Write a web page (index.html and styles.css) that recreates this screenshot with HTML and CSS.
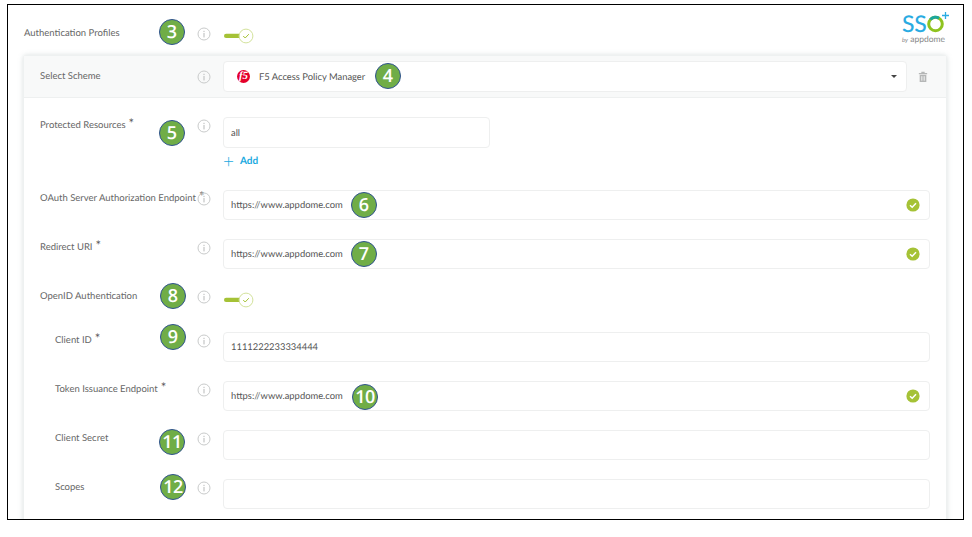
FILE: index.html
```html
<!DOCTYPE html>
<html lang="en">
<head>
<meta charset="utf-8">
<title>Authentication Profiles</title>
<link rel="stylesheet" href="styles.css">
</head>
<body>
<svg class="defs" width="0" height="0" aria-hidden="true">
  <symbol id="info" viewBox="0 0 14 14">
    <circle cx="7" cy="7" r="6" fill="none" stroke="#c9cbcb" stroke-width="1"/>
    <rect x="6.4" y="6" width="1.2" height="4.4" fill="#c3c5c5"/>
    <rect x="6.4" y="3.8" width="1.2" height="1.3" fill="#c3c5c5"/>
  </symbol>
  <symbol id="ok" viewBox="0 0 14 14">
    <circle cx="7" cy="7" r="6.6" fill="#a5c236"/>
    <path d="M4 7.2l2.2 2 3.8-4" fill="none" stroke="#fff" stroke-width="1.5"/>
  </symbol>
  <symbol id="toggle" viewBox="0 0 30 16">
    <rect x="0" y="5.8" width="17" height="4.2" rx="2.1" fill="#a5c236"/>
    <circle cx="22" cy="8" r="6.9" fill="#fff" stroke="#d3e29b" stroke-width="1"/>
    <path d="M19.2 8l2 2 3.6-3.8" fill="none" stroke="#a5c236" stroke-width="1"/>
  </symbol>
</svg>
<main class="frame">
  <div class="logo">
    <div class="logo-mark">
      <span class="logo-ss">SS</span><svg class="logo-ring" viewBox="0 0 26 24" role="img" aria-label="O"><circle cx="9.5" cy="13" r="6.8" fill="none" stroke="#8fc31f" stroke-width="3"/><path d="M4.4 8.6a6.8 6.8 0 0 1 8.6-1.4" fill="none" stroke="#1ba6a0" stroke-width="3"/><path d="M19.5 1v7M16 4.5h7" stroke="#29abe2" stroke-width="1.3"/></svg>
    </div>
    <div class="logo-by"><i>by</i> appdome</div>
  </div>

  <div class="row row-top">
    <span class="label">Authentication Profiles</span>
    <svg class="info"><use href="#info"/></svg>
    <svg class="toggle"><use href="#toggle"/></svg>
    <span class="badge b3">3</span>
  </div>

  <section class="card">
    <div class="row scheme">
      <span class="label">Select Scheme</span>
      <svg class="info"><use href="#info"/></svg>
      <div class="control">
        <div class="input select">
          <span class="f5">f5</span>
          <span class="value">F5 Access Policy Manager</span>
          <span class="caret"></span>
        </div>
        <svg class="trash" viewBox="0 0 12 14" aria-hidden="true">
          <path d="M4 1.5h4M1 3h10" stroke="#b5b7b7" stroke-width="1.4" fill="none"/>
          <path d="M2 4.4h8V13H2z" fill="#b5b7b7"/>
          <path d="M4.2 6v5.4M6 6v5.4M7.8 6v5.4" stroke="#fff" stroke-width=".7"/>
        </svg>
      </div>
      <span class="badge b4">4</span>
    </div>

    <div class="rows">
      <div class="row field-group">
        <span class="label">Protected Resources<sup>*</sup></span>
        <svg class="info"><use href="#info"/></svg>
        <div class="stack">
          <div class="input short"><span class="value">all</span></div>
          <div class="add"><span class="plus">+</span>Add</div>
        </div>
        <span class="badge b5">5</span>
      </div>

      <div class="row">
        <span class="label">OAuth Server Authorization Endpoint<sup>*</sup></span>
        <svg class="info"><use href="#info"/></svg>
        <div class="input"><span class="value">https://www.appdome.com</span><svg class="ok"><use href="#ok"/></svg></div>
        <span class="badge b6">6</span>
      </div>

      <div class="row">
        <span class="label">Redirect URI<sup>*</sup></span>
        <svg class="info"><use href="#info"/></svg>
        <div class="input"><span class="value">https://www.appdome.com</span><svg class="ok"><use href="#ok"/></svg></div>
        <span class="badge b7">7</span>
      </div>

      <div class="row row-switch">
        <span class="label">OpenID Authentication</span>
        <svg class="info"><use href="#info"/></svg>
        <svg class="toggle"><use href="#toggle"/></svg>
        <span class="badge b8">8</span>
      </div>

      <div class="row sub">
        <span class="label">Client ID<sup>*</sup></span>
        <svg class="info"><use href="#info"/></svg>
        <div class="input"><span class="value">1111222233334444</span></div>
        <span class="badge b9">9</span>
      </div>

      <div class="row sub">
        <span class="label">Token Issuance Endpoint<sup>*</sup></span>
        <svg class="info"><use href="#info"/></svg>
        <div class="input"><span class="value">https://www.appdome.com</span><svg class="ok"><use href="#ok"/></svg></div>
        <span class="badge b10">10</span>
      </div>

      <div class="row sub">
        <span class="label">Client Secret</span>
        <svg class="info"><use href="#info"/></svg>
        <div class="input"></div>
        <span class="badge b11">11</span>
      </div>

      <div class="row sub">
        <span class="label">Scopes</span>
        <svg class="info"><use href="#info"/></svg>
        <div class="input"></div>
        <span class="badge b12">12</span>
      </div>
    </div>
  </section>
</main>
</body>
</html>
```
FILE: styles.css
```css
* { box-sizing: border-box; }
html, body { margin: 0; background: #fff; }
body {
  font-family: Lato, "Open Sans", sans-serif;
  font-size: 10px;
  color: #666;
  text-rendering: geometricPrecision;
}
.defs { position: absolute; }

.frame {
  position: relative;
  width: 957px;
  height: 516px;
  margin: 4px 0 0 7px;
  border: 1px solid #000;
  overflow: hidden;
}

/* Row layout: label, info, control */
.row {
  position: relative;
  display: grid;
  grid-template-columns: 161px 14px 1fr;
  column-gap: 12px;
  align-items: start;
  padding-left: 16px;
  margin-bottom: 19px;
}
.label { font-size: 9.5px; line-height: 16px; padding-top: 1px; white-space: nowrap; }
.label sup { font-size: 13px; line-height: 0; vertical-align: 0; margin-left: 3px; color: #555; }
.info { width: 14px; height: 14px; margin-top: 2px; }

.row-top { height: 50px; padding-top: 20px; margin: 0; }
.row-top .toggle { margin-top: 3px; margin-left: 1px; }
.toggle { width: 30px; height: 16px; }

.card {
  margin: 0 16px 0 15px;
  border: 1px solid #eef1f1;
  border-radius: 4px 4px 0 0;
  box-shadow: 0 0 5px rgba(150, 165, 165, .35);
  background: #fff;
}
.card .row { grid-template-columns: 145px 14px 1fr; padding-right: 16px; }

.scheme {
  height: 42px;
  margin: 0;
  padding-top: 5px;
  padding-bottom: 5px;
  background: #f8f9f9;
  border-bottom: 1px solid #eef0f0;
  align-items: center;
}
.scheme .label { margin-top: -1px; }
.scheme .info { margin: 0; }
.scheme .control { display: flex; align-items: center; }
.trash { width: 10px; height: 12px; margin: 0 2px 0 11px; flex: none; }

.rows { padding-top: 19px; }

.input {
  display: flex;
  align-items: center;
  height: 30px;
  padding: 0 9px 0 7px;
  border: 1px solid #eeefef;
  border-radius: 4px;
  background: #fff;
}
.value { color: #555; font-size: 9.4px; padding-top: 1px; }
.ok { width: 14px; height: 14px; margin-left: auto; }
.select { flex: 1; height: 31px; padding-left: 13px; }
.short { width: 267px; height: 31px; }
.caret {
  margin-left: auto;
  width: 0; height: 0;
  border-left: 3px solid transparent;
  border-right: 3px solid transparent;
  border-top: 3px solid #444;
}
.f5 {
  display: flex;
  align-items: center;
  justify-content: center;
  width: 13px;
  height: 13px;
  margin-right: 9px;
  border-radius: 50%;
  background: #e4002b;
  color: #fff;
  font: italic 700 11px/1 "Liberation Serif", serif;
}

.stack { display: flex; flex-direction: column; }
.field-group { margin-bottom: 17px; }
.add {
  display: flex;
  align-items: center;
  height: 26px;
  margin-bottom: -1px;
  color: #1aa9e0;
  font-weight: 700;
}
.plus { font-size: 19px; font-weight: 300; line-height: 1; width: 17px; }

.row-switch { height: 25px; }
.row-switch .toggle { margin-top: 4px; margin-left: 1px; }
.sub .label { padding-left: 15px; }

/* Numbered callouts laid over the form */
.badge {
  position: absolute;
  width: 26px;
  height: 26px;
  display: flex;
  align-items: center;
  justify-content: center;
  border-radius: 50%;
  background: #70ad47;
  border: 1px solid #2f528f;
  color: #fff;
  font: 600 18px/1 "Open Sans", sans-serif;
}
.b3 { left: 151px; top: 14px; }
.b4 { left: 351px; top: 7px; }
.b5 { left: 135px; top: 3px; }
.b6 { left: 327px; top: 2px; }
.b7 { left: 327px; top: 2px; }
.b8 { left: 136px; top: -5px; }
.b9 { left: 136px; top: -8px; }
.b10 { left: 328px; top: 3px; }
.b11 { left: 135px; top: -1px; }
.b12 { left: 136px; top: -5px; }
.b10, .b11, .b12 { letter-spacing: -.5px; }

/* Logo */
.logo {
  position: absolute;
  right: 15px;
  top: 8px;
  width: 46px;
  z-index: 1;
}
.logo-mark { display: flex; align-items: flex-start; height: 21px; }
.logo-ss { color: #29abe2; font-size: 23px; line-height: 21px; font-weight: 500; letter-spacing: -.3px; }
.logo-ring { width: 26px; height: 24px; margin-top: -2px; flex: none; }
.logo-by { font-size: 8.5px; font-weight: 400; line-height: 8px; color: #888; margin-top: 1px; white-space: nowrap; }
.logo-by i { font-size: 6px; }
```
